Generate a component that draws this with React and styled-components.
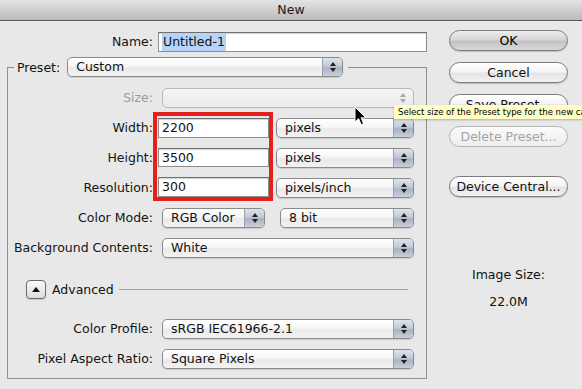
import React from 'react';
import styled, { createGlobalStyle, css } from 'styled-components';

const GlobalStyle = createGlobalStyle`
  html, body {
    margin: 0;
    padding: 0;
    background: #e8e8e8;
  }
  * {
    box-sizing: border-box;
  }
`;

const Window = styled.div`
  position: relative;
  width: 582px;
  height: 389px;
  overflow: hidden;
  background: #e8e8e8;
  font-family: 'DejaVu Sans', 'Liberation Sans', sans-serif;
  font-size: 12.5px;
  color: #111;
`;

const TitleBar = styled.div`
  height: 21px;
  line-height: 20px;
  text-align: center;
  color: #1a1a1a;
  background: linear-gradient(#e4e4e4, #b9b9b9);
  border-bottom: 1px solid #5a5a5a;
`;

const Body = styled.div`
  display: flex;
`;

const LeftPane = styled.div`
  width: 432px;
  padding-top: 11px;
`;

const RightPane = styled.div`
  flex: 1;
  display: flex;
  flex-direction: column;
  align-items: flex-start;
  gap: 11px;
  padding: 9px 0 0 17px;
`;

const FieldGrid = styled.div`
  display: grid;
  grid-template-columns: ${(p) => p.$cols || '150px 118px 138px'};
  grid-auto-rows: 20px;
  row-gap: 10px;
  align-items: center;
`;

const Label = styled.div`
  grid-column: 1;
  text-align: right;
  padding-right: 5px;
  line-height: 20px;
  white-space: nowrap;
  color: ${(p) => (p.$disabled ? '#9c9c9c' : '#141414')};
`;

const TextField = styled.div`
  height: 20px;
  line-height: 18px;
  padding-left: 3px;
  background: #fff;
  border: 1px solid #8e8e8e;
  border-top-color: #6f6f6f;
  box-shadow: inset 0 1px 1px rgba(0, 0, 0, 0.18);
  white-space: nowrap;
  overflow: hidden;
`;

const Selected = styled.span`
  background: #b5d3f7;
  padding: 1px 1px 2px;
`;

const Group = styled.fieldset`
  margin: 5px 0 0 7px;
  width: 420px;
  min-inline-size: 0;
  padding: 11px 0 9px 0;
  border: 1px solid #8f8f8f;
`;

const Legend = styled.legend`
  margin-left: 6px;
  padding: 0 5px 0 3px;
`;

const LegendInner = styled.div`
  display: flex;
  align-items: center;
  gap: 7px;
  height: 20px;
`;

const PopUpBox = styled.div`
  grid-column: ${(p) => p.$span || 'auto'};
  margin-left: ${(p) => p.$inset || 0}px;
  width: ${(p) => (p.$width ? `${p.$width}px` : 'auto')};
  justify-self: ${(p) => (p.$width ? 'start' : 'stretch')};
  height: 20px;
  display: flex;
  border: 1px solid #8a8a8a;
  border-radius: 5px;
  overflow: hidden;
  box-shadow: 0 1px 1px rgba(0, 0, 0, 0.12);
  background: linear-gradient(#ffffff 0%, #f6f6f6 45%, #e9e9e9 55%, #f3f3f3 100%);
  ${(p) =>
    p.$disabled &&
    css`
      border-color: #b9b9b9;
      box-shadow: none;
      background: linear-gradient(#f4f4f4, #ebebeb);
    `}
`;

const PopUpText = styled.div`
  flex: 1;
  padding-left: 8px;
  line-height: 18px;
  white-space: nowrap;
  overflow: hidden;
`;

const Stepper = styled.div`
  width: 20px;
  display: flex;
  flex-direction: column;
  align-items: center;
  justify-content: center;
  gap: 2px;
  border-left: 1px solid #9aa2ae;
  background: linear-gradient(#dfe4ec 0%, #c2cad6 45%, #a9b3c3 55%, #c9d0dc 100%);
  ${(p) =>
    p.$disabled &&
    css`
      border-left: none;
      background: transparent;
    `}
`;

const Arrow = styled.span`
  width: 0;
  height: 0;
  border-left: 3px solid transparent;
  border-right: 3px solid transparent;
  ${(p) =>
    p.$down
      ? css`border-top: 4px solid ${p.$disabled ? '#a8a8a8' : '#222'};`
      : css`border-bottom: 4px solid ${p.$disabled ? '#a8a8a8' : '#222'};`}
`;

const PopUp = ({ value, disabled, span, inset, width }) => (
  <PopUpBox $disabled={disabled} $span={span} $inset={inset} $width={width}>
    <PopUpText>{value}</PopUpText>
    <Stepper $disabled={disabled}>
      <Arrow $disabled={disabled} />
      <Arrow $down $disabled={disabled} />
    </Stepper>
  </PopUpBox>
);

// red annotation box drawn around the three size fields
const Highlight = styled.div`
  grid-column: 2;
  grid-row: 2 / 5;
  align-self: stretch;
  margin: -6px 3px -3px -5px;
  padding: 2px 0 0 1px;
  border: 4px solid #e3201b;
  display: flex;
  flex-direction: column;
  gap: 10px;
`;

const AdvancedRow = styled.div`
  display: flex;
  align-items: center;
  height: 19px;
  margin: 22px 18px 0 18px;
`;

const Disclosure = styled.div`
  width: 20px;
  height: 19px;
  display: flex;
  align-items: center;
  justify-content: center;
  border: 1px solid #6a6a6a;
  border-radius: 4px;
  background: linear-gradient(#fafafa, #dcdcdc);
  box-shadow: 0 1px 1px rgba(0, 0, 0, 0.15);
`;

const DisclosureArrow = styled.span`
  width: 0;
  height: 0;
  border-left: 4px solid transparent;
  border-right: 4px solid transparent;
  border-bottom: 5px solid #111;
  margin-top: -1px;
`;

const AdvancedLabel = styled.span`
  margin-left: 6px;
`;

const Rule = styled.div`
  flex: 1;
  height: 1px;
  margin-left: 5px;
  background: #a3a3a3;
`;

const AdvancedGrid = styled(FieldGrid)`
  margin-top: 20px;
`;

const Button = styled.div`
  width: 119px;
  height: 21px;
  line-height: 19px;
  text-align: center;
  border: 1px solid #7c7c7c;
  border-radius: 11px;
  white-space: nowrap;
  box-shadow: 0 1px 1px rgba(0, 0, 0, 0.18);
  background: linear-gradient(#ffffff 0%, #f5f5f5 45%, #e4e4e4 55%, #f2f2f2 100%);
  margin-top: ${(p) => p.$offset || 0}px;
  ${(p) =>
    p.$default &&
    css`
      background: linear-gradient(#eeeeee 0%, #d6d6d6 45%, #c3c3c3 55%, #d9d9d9 100%);
      color: #000;
    `}
  ${(p) =>
    p.$disabled &&
    css`
      color: #a4a4a4;
      border-color: #b3b3b3;
      box-shadow: none;
      background: linear-gradient(#fbfbfb, #ededed);
    `}
`;

const ImageSize = styled.div`
  width: 119px;
  margin-top: 59px;
  text-align: center;
  line-height: 16px;
`;

const ImageSizeValue = styled.div`
  margin-top: 11px;
`;

const Tooltip = styled.div`
  position: absolute;
  left: 394px;
  top: 105px;
  height: 14px;
  padding: 0 4px;
  line-height: 14px;
  font-size: 8.5px;
  white-space: nowrap;
  color: #000;
  background: #ffffc6;
  box-shadow: 0 1px 2px rgba(0, 0, 0, 0.25);
`;

const Cursor = styled.svg`
  position: absolute;
  left: 354px;
  top: 106px;
`;

const App = () => (
  <Window>
    <GlobalStyle />
    <TitleBar>New</TitleBar>
    <Body>
      <LeftPane>
        <FieldGrid $cols="158px 269px">
          <Label>Name:</Label>
          <TextField>
            <Selected>Untitled-1</Selected>
          </TextField>
        </FieldGrid>

        <Group>
          <Legend>
            <LegendInner>
              <span>Preset:</span>
              <PopUp value="Custom" width={276} />
            </LegendInner>
          </Legend>

          <FieldGrid>
            <Label $disabled>Size:</Label>
            <PopUp value="" disabled span="2 / 4" inset={4} />

            <Label style={{ gridRow: 2 }}>Width:</Label>
            <Highlight>
              <TextField>2200</TextField>
              <TextField>3500</TextField>
              <TextField>300</TextField>
            </Highlight>
            <PopUp value="pixels" span="3" />

            <Label style={{ gridRow: 3 }}>Height:</Label>
            <PopUp value="pixels" span="3" />

            <Label style={{ gridRow: 4 }}>Resolution:</Label>
            <PopUp value="pixels/inch" span="3" />

            <Label>Color Mode:</Label>
            <PopUp value="RGB Color" span="2" inset={4} width={103} />
            <PopUp value="8 bit" span="3" inset={4} />

            <Label>Background Contents:</Label>
            <PopUp value="White" span="2 / 4" inset={4} />
          </FieldGrid>

          <AdvancedRow>
            <Disclosure>
              <DisclosureArrow />
            </Disclosure>
            <AdvancedLabel>Advanced</AdvancedLabel>
            <Rule />
          </AdvancedRow>

          <AdvancedGrid>
            <Label>Color Profile:</Label>
            <PopUp value="sRGB IEC61966-2.1" span="2 / 4" inset={4} />

            <Label>Pixel Aspect Ratio:</Label>
            <PopUp value="Square Pixels" span="2 / 4" inset={4} />
          </AdvancedGrid>
        </Group>
      </LeftPane>

      <RightPane>
        <Button $default>OK</Button>
        <Button>Cancel</Button>
        <Button>Save Preset...</Button>
        <Button $disabled>Delete Preset...</Button>
        <Button $offset={18}>Device Central...</Button>
        <ImageSize>
          <div>Image Size:</div>
          <ImageSizeValue>22.0M</ImageSizeValue>
        </ImageSize>
      </RightPane>
    </Body>

    <Tooltip>Select size of the Preset type for the new canvas</Tooltip>
    <Cursor width="13" height="20" viewBox="0 0 13 20">
      <path
        d="M1 1 L1 16 L4.6 12.6 L7.2 18.6 L9.6 17.6 L7 11.8 L12 11.8 Z"
        fill="#000"
        stroke="#fff"
        strokeWidth="1"
        strokeLinejoin="round"
      />
    </Cursor>
  </Window>
);

export default App;
